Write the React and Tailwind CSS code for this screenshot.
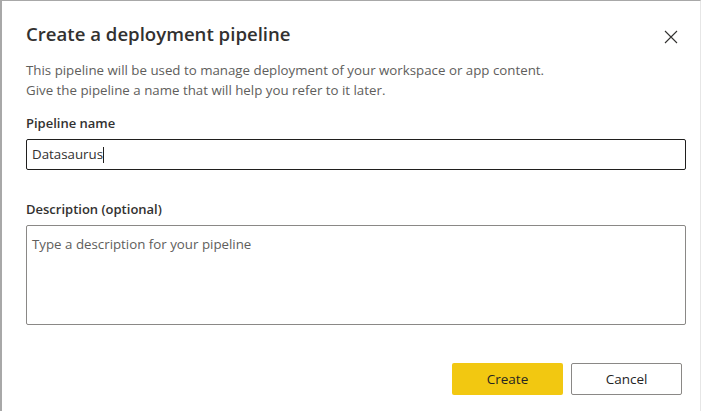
import React from 'react';

function CloseIcon() {
  return (
    <svg width="14" height="14" viewBox="0 0 14 14" className="text-[#323130]">
      <path d="M1 1 L13 13 M13 1 L1 13" stroke="currentColor" strokeWidth="1.1" fill="none" />
    </svg>
  );
}

export default function App() {
  return (
    <div className="w-[702px] h-[411px] bg-white overflow-hidden font-['Open_Sans',sans-serif] text-[#323130]">
      <div className="w-[701px] h-[411px] border-l-2 border-t border-r border-l-[#a8a8a8] border-t-[#a8a8a8] border-r-[#e6e6e6] pl-[24px] pr-[14px]">
        {/* Header */}
        <div className="flex items-start justify-between pt-[20px]">
          <h1 className="text-[18.6px] font-semibold leading-[26px] text-[#323130]">
            Create a deployment pipeline
          </h1>
          <button className="mt-[9px] mr-[8px] p-0">
            <CloseIcon />
          </button>
        </div>

        <p className="mt-[13px] text-[13.3px] leading-[20px] text-[#605e5c]">
          This pipeline will be used to manage deployment of your workspace or app content.
          <br />
          Give the pipeline a name that will help you refer to it later.
        </p>

        {/* Pipeline name */}
        <div className="mt-[13px] w-[660px]">
          <label className="block text-[13px] font-semibold leading-[20px] text-[#323130]">Pipeline name</label>
          <div className="mt-[6px] h-[31px] border border-[#201f1e] rounded-[2px] flex items-center px-[5px]">
            <span className="text-[13.3px] text-[#323130]">Datasaurus</span>
            <span className="w-px h-[16px] bg-[#201f1e]" />
          </div>
        </div>

        {/* Description */}
        <div className="mt-[29px] w-[660px]">
          <label className="block text-[13px] font-semibold leading-[20px] text-[#323130]">Description (optional)</label>
          <div className="mt-[6px] h-[100px] border border-[#8a8886] rounded-[2px] px-[5px] pt-[5px]">
            <span className="text-[13.3px] text-[#605e5c]">Type a description for your pipeline</span>
          </div>
        </div>

        {/* Footer */}
        <div className="mt-[38px] w-[656px] flex justify-end gap-[8px]">
          <button className="w-[111px] h-[32px] rounded-[2px] bg-[#f2c811] text-[13.5px] text-[#252423]">
            Create
          </button>
          <button className="w-[111px] h-[32px] rounded-[2px] border border-[#8a8886] bg-white text-[13.5px] text-[#252423]">
            Cancel
          </button>
        </div>
      </div>
    </div>
  );
}
